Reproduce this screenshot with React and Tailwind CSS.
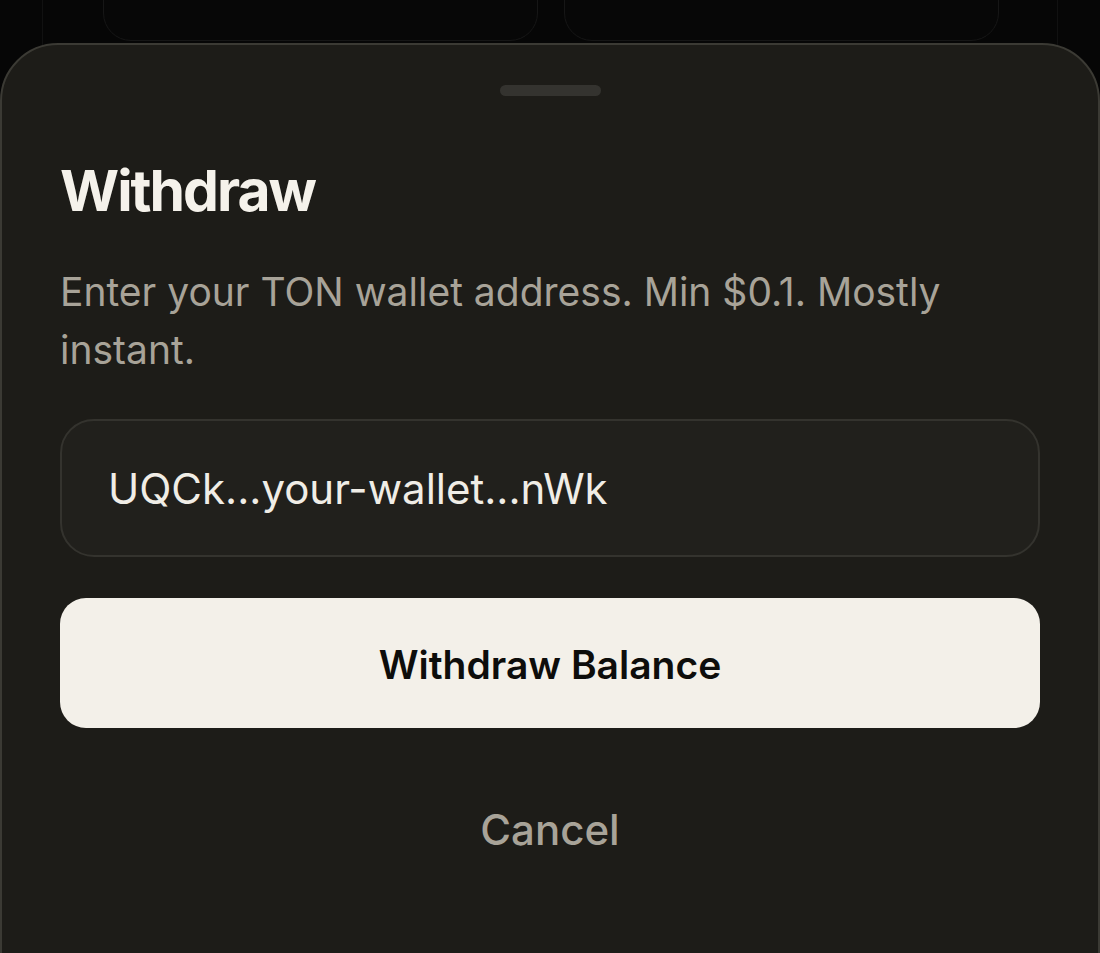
export default function App() {
  return (
    <div
      className="relative h-[953px] w-full overflow-hidden bg-[#060606]"
      style={{ fontFamily: 'Inter, "Noto Sans", sans-serif' }}
    >
      {/* page behind the sheet */}
      <div className="mx-[42px] h-full border-x border-[#111111]">
        <div className="-mt-[60px] grid grid-cols-2 gap-[26px] pl-[60px] pr-[58px]">
          <div className="h-[101px] rounded-[28px] border border-[#161616] bg-[#070707]" />
          <div className="h-[101px] rounded-[28px] border border-[#161616] bg-[#070707]" />
        </div>
      </div>

      {/* bottom sheet */}
      <div className="absolute inset-x-0 top-[43px] bottom-[-60px] rounded-t-[58px] border-2 border-[#3b3a34] bg-[#1d1c18] px-[58px]">
        <div className="flex justify-center pt-[40px]">
          <div className="h-[11px] w-[101px] rounded-full bg-[#34332f]" />
        </div>

        <h2 className="mt-[66px] text-[57px] font-bold leading-none tracking-[-2px] text-[#f5f2eb]">
          Withdraw
        </h2>

        <p className="mt-[44px] text-[39px] leading-[58px] text-[#a8a398]">
          Enter your TON wallet address. Min $0.1. Mostly instant.
        </p>

        <div className="mt-[40px] flex h-[138px] items-center rounded-[34px] border-2 border-[#34332e] bg-[#21201c] px-[46px]">
          <span className="text-[42px] text-[#f0ede6]">UQCk...your-wallet...nWk</span>
        </div>

        <button className="mt-[41px] flex h-[130px] w-full items-center justify-center rounded-[26px] bg-[#f3f0e9] pt-[4px] text-[39px] font-semibold text-[#0d0d0b]">
          Withdraw Balance
        </button>

        <div className="mt-[70px] flex justify-center">
          <span className="text-[42px] font-medium text-[#a8a398]">Cancel</span>
        </div>
      </div>
    </div>
  );
}
